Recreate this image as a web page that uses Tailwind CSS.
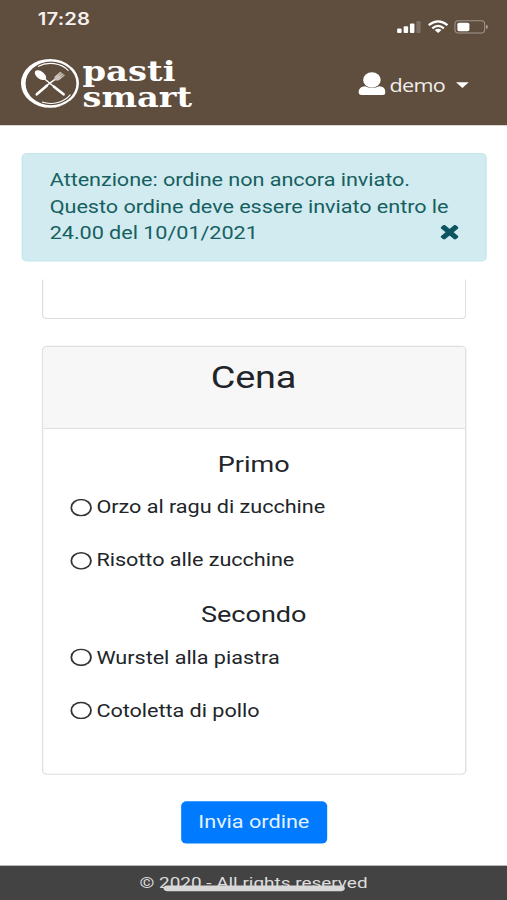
<!DOCTYPE html>
<html lang="it">
<head>
<meta charset="utf-8">
<meta name="viewport" content="width=device-width">
<title>Pasti Smart</title>
<script src="https://cdn.jsdelivr.net/npm/@tailwindcss/browser@4"></script>
</head>
<body class="w-[507px] h-[900px] overflow-hidden bg-white">
<!-- 375x812 layout stretched to fill the window -->
<div class="w-[375px] h-[812px] origin-top-left [transform:scale(1.352,1.10837)] flex flex-col bg-white text-[#212529] text-base leading-6 font-[Roboto,sans-serif]">
  <header class="h-[113px] shrink-0 bg-[#5f4d3e] text-white flex flex-col">
    <div class="h-[44px] flex items-start justify-between pl-[28px] pr-[14px]">
      <span class="font-[Inter,sans-serif] font-semibold text-[15px] leading-5 mt-[7.5px] tracking-[0.1px] text-[#f5f1ee]">17:28</span>
      <svg class="w-[68px] h-[13px] mt-[17.5px]" viewBox="396 19.8 92 14.4" preserveAspectRatio="none">
        <g fill="#fff">
          <rect x="397" y="28.3" width="4.5" height="4.5" rx="1"/>
          <rect x="403.5" y="26" width="4.5" height="6.8" rx="1"/>
          <rect x="409.8" y="23.3" width="4.5" height="9.5" rx="1"/>
          <rect x="416.2" y="20.8" width="4.3" height="12" rx="1" opacity=".2"/>
        </g>
        <g fill="none" stroke="#fff" stroke-width="2.2">
          <path d="M428.6 25Q438 17.400 447.400 25"/>
          <path d="M432.200 28.200Q438 23.400 443.800 28.200"/>
        </g>
        <path d="M434.600 29.800Q438 27.200 441.400 29.800L438 32.800Z" fill="#fff"/>
        <rect x="454.800" y="20.700" width="29.800" height="12.200" rx="3.600" fill="none" stroke="#fff" stroke-opacity=".42"/>
        <rect x="457.300" y="22.500" width="12" height="8.500" rx="1.600" fill="#fff"/>
        <path d="M486 24.700Q487.800 25.200 487.800 26.800Q487.800 28.200 486 28.800Z" fill="#fff" opacity=".5"/>
      </svg>
    </div>
    <div class="flex items-start justify-between pl-[15px] pr-[28px]">
      <svg class="w-[129px] h-[50px] mt-[7.500px] overflow-visible" viewBox="20.3 57.1 174.4 55.4" preserveAspectRatio="none">
        <!-- plate: outer disc with an off-centre opening, plus a thin inner rim -->
        <path fill="#fff" fill-rule="evenodd" d="M50 58.400A29 24.400 0 1 0 50 107.200A29 24.400 0 1 0 50 58.400ZM51 61A25.400 21.800 0 1 1 51 104.600A25.400 21.800 0 1 1 51 61Z"/>
        <g fill="none" stroke="#fff">
          <path d="M38 66C48 60.500 61 62.500 68.500 70" stroke-width="1.100"/>
          <path d="M42 101.500C53 105 64 101.500 70.500 94" stroke-width="1.100"/>
          <path d="M63 60.200Q68 62.500 71.500 66.500" stroke="#5f4d3e" stroke-width=".8"/>
          <path d="M60 105.800Q66 104 70 100.500" stroke="#5f4d3e" stroke-width=".6"/>
          <path d="M46 85.500L57 77.300" stroke-width="1.500"/>
          <path d="M43.500 77.500L55 87" stroke-width="1.500"/>
          <path d="M36.800 93.800L46.800 85.200" stroke-width="2.600" stroke-linecap="round"/>
          <path d="M54 86.200L63.600 93.800" stroke-width="2.600" stroke-linecap="round"/>
        </g>
        <ellipse cx="40.500" cy="74.600" rx="6.500" ry="3.700" transform="rotate(36 40.500 74.600)" fill="#fff"/>
        <path d="M54.500 76.300L60.300 71.300L65 74.800L59.300 79.400Q56.500 80.800 54.500 79.200Z" fill="#cbc3bb"/>
        <path d="M59 75L62.500 72.300M60.700 76.500L64 73.800" stroke="#5f4d3e" stroke-width=".6"/>
        <g fill="#fff" font-family="DejaVu Serif" font-weight="700" font-size="28.500">
          <text x="82.500" y="80.800" textLength="93" lengthAdjust="spacingAndGlyphs">pasti</text>
          <text x="82.500" y="106.800" textLength="109.500" lengthAdjust="spacingAndGlyphs">smart</text>
        </g>
      </svg>
      <div class="flex items-start mt-[21.300px] text-[#f1edea]">
        <svg class="w-[20.500px] h-[21px]" viewBox="358 73 28.4 23.3" preserveAspectRatio="none" fill="#fff">
          <path d="M365 87.300C361 87.500 358.300 90 358.300 93.300Q358.300 96 361.500 96H382.800Q386 96 386 93.300C386 90 383.500 87.500 379.500 87.300Q372 90.800 365 87.300Z"/>
          <ellipse cx="372" cy="80.900" rx="9" ry="7.700"/>
        </svg>
        <span class="ml-[3px] w-[41px] font-['Open_Sans',sans-serif] text-[16px] tracking-[-0.500px]">demo</span>
        <svg class="w-[10px] h-[6px] ml-[8px] mt-[9px]" viewBox="0 0 10 6" preserveAspectRatio="none"><path d="M.3.300H9.700L5 5.500Z" fill="#fff"/></svg>
      </div>
    </div>
  </header>

  <main class="flex-1 flex flex-col">
    <div class="mt-[24.500px] ml-[15.500px] w-[344.500px] h-[98px] shrink-0 rounded-[4px] border border-[#c4e7ec] bg-[#d1ebf0] text-[#16605f] px-5 py-3 relative">
      <p class="tracking-[-0.040px] ml-[0.300px] mt-[0.300px]">Attenzione: ordine non ancora inviato.<br>Questo ordine deve essere inviato entro le<br>24.00 del 10/01/2021</p>
      <svg class="absolute right-[20px] bottom-[19px] w-[13px] h-[13px]" viewBox="0 0 13 13"><path d="M2.500 2.500L10.500 10.500M10.500 2.500L2.500 10.500" stroke="#0c5460" stroke-width="4.200" stroke-linecap="square" stroke-linejoin="round"/></svg>
    </div>
    <div class="mt-[16px] ml-[31px] w-[314px] h-[36px] shrink-0 rounded-b-[4px] border border-t-0 border-[#dfdfdf]"></div>
    <section class="mt-[24px] ml-[31px] w-[314px] h-[387.500px] shrink-0 rounded-[4px] border border-[#dfdfdf] flex flex-col">
      <div class="h-[74px] shrink-0 bg-[#f7f7f7] border-b border-[#dfdfdf] rounded-t-[3px] pt-[11px] text-center">
        <h2 class="text-[28px] leading-[34px] tracking-[-0.100px] -ml-[1px]">Cena</h2>
      </div>
      <div class="pl-[19.700px] pr-[20.300px] flex flex-col">
        <h3 class="mt-[20px] text-[20px] leading-6 text-center">Primo</h3>
        <label class="mt-[15px] h-6 flex items-center gap-[4px]"><i class="size-[16px] rounded-full shadow-[inset_0_0_0_1.4px_#333]"></i><span class="relative top-[0.900px] -left-[0.400px] tracking-[-0.030px]">Orzo al ragu di zucchine</span></label>
        <label class="mt-[24px] h-6 flex items-center gap-[4px]"><i class="size-[16px] rounded-full shadow-[inset_0_0_0_1.4px_#333]"></i><span class="relative top-[0.900px] -left-[0.400px] tracking-[-0.030px]">Risotto alle zucchine</span></label>
        <h3 class="mt-[24px] text-[20px] leading-6 text-center">Secondo</h3>
        <label class="mt-[15.300px] h-6 flex items-center gap-[4px]"><i class="size-[16px] rounded-full shadow-[inset_0_0_0_1.4px_#333]"></i><span class="relative top-[0.900px] -left-[0.400px] tracking-[-0.030px]">Wurstel alla piastra</span></label>
        <label class="mt-[24px] h-6 flex items-center gap-[4px]"><i class="size-[16px] rounded-full shadow-[inset_0_0_0_1.4px_#333]"></i><span class="relative top-[0.900px] -left-[0.400px] tracking-[-0.030px]">Cotoletta di pollo</span></label>
      </div>
    </section>
    <button class="mt-[23.500px] ml-[133.500px] w-[108.500px] h-[38px] shrink-0 rounded-[4px] bg-[#007bff] text-[#e4f1ff]">Invia ordine</button>
  </main>
  <footer class="h-[31px] shrink-0 bg-[#434343] text-[#dedede] text-[14px] leading-[30px] text-center relative">© 2020 - All rights reserved
    <div class="absolute left-[121px] top-[18px] w-[134px] h-[5px] rounded-full bg-[#d8d8d8]"></div>
  </footer>
</div>
</body>
</html>
